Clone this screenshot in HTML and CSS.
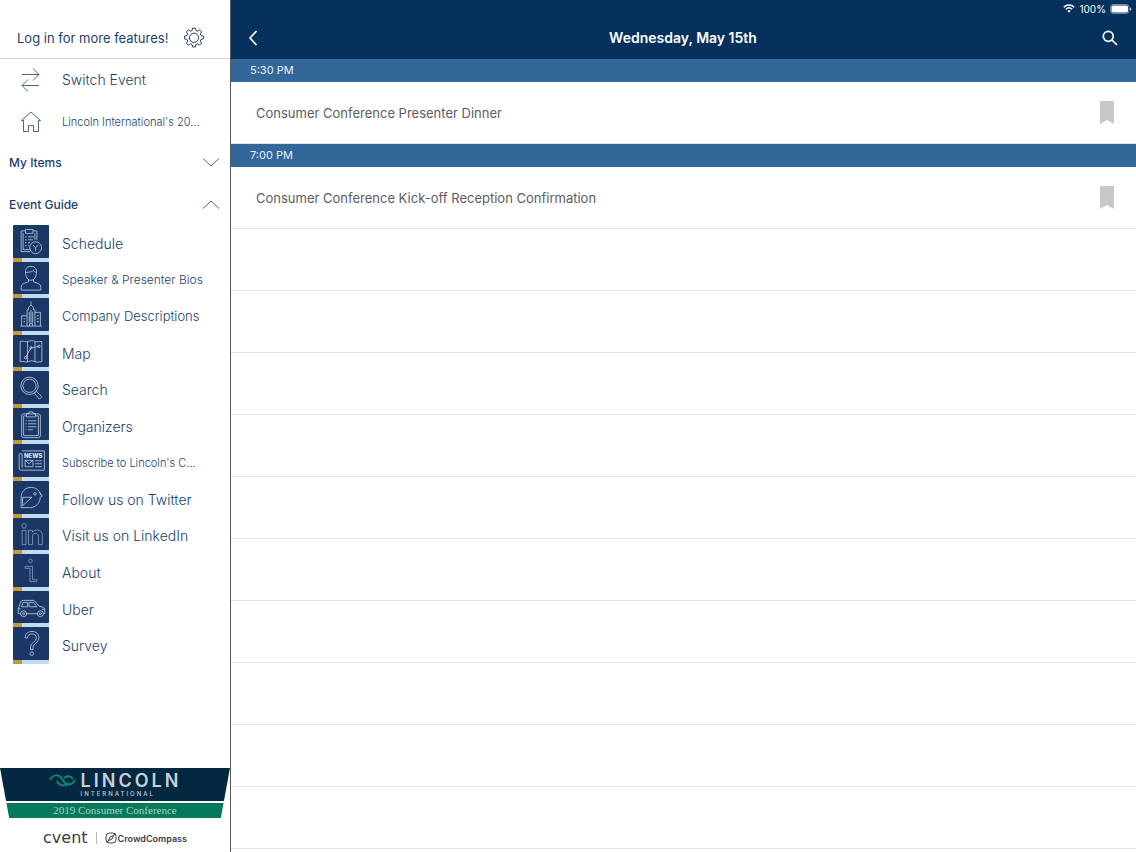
FILE: index.html
```html
<!DOCTYPE html>
<html lang="en">
<head>
  <meta charset="UTF-8" />
  <meta name="viewport" content="width=device-width, initial-scale=1.0" />
  <title>Schedule</title>
  <link rel="stylesheet" href="styles.css">
</head>
<body>

  <!-- Sidebar -->
  <aside class="sidebar">
    <div class="login">
      <a href="#login">Log in for more features!</a>
      <button class="icon-btn" aria-label="Settings">
        <svg width="22" height="22" viewBox="0 0 22 22">
          <path d="M9.6 1.2h2.8l.5 2.3 1.7.7 2-1.3 2 2-1.3 2 .8 1.7 2.3.5v2.8l-2.3.5-.8 1.7 1.3 2-2 2-2-1.3-1.7.8-.5 2.3H9.6l-.5-2.3-1.7-.8-2 1.3-2-2 1.3-2-.8-1.7-2.3-.5V9.1l2.3-.5.8-1.7-1.3-2 2-2 2 1.3 1.7-.7z" />
          <circle cx="11" cy="10.800" r="4.600" />
        </svg>
      </button>
    </div>

    <nav class="top-links">
      <a href="#switch">
        <svg width="20" height="24" viewBox="0 0 20 24"><path d="M1 6.500h17M12 .5l6 6-6 6M18 17.500H1M7 11.500l-6 6 6 6" /></svg>
        <span>Switch Event</span>
      </a>
      <a href="#home" class="small">
        <svg width="20" height="22" viewBox="0 0 20 22"><path d="M2.500 9.500H.5L10 1l9.500 8.500h-2M2.500 9.500v11h5v-6h5v6h5v-11" /></svg>
        <span>Lincoln International's 20...</span>
      </a>
    </nav>

    <button class="section-btn" aria-expanded="false">
      My Items
      <svg width="16" height="9" viewBox="0 0 16 9"><path d="M0 .5l8 7.500 8-7.500" /></svg>
    </button>
    <button class="section-btn" aria-expanded="true">
      Event Guide
      <svg width="16" height="9" viewBox="0 0 16 9"><path d="M0 8.500L8 1l8 7.500" /></svg>
    </button>

    <nav class="guide">
      <a href="#schedule">
        <span class="tile"><svg viewBox="0 0 36 33">
          <path d="M17 27H8V6h4M20 6h4v9M12.500 4.500h7.500v4h-7.500zM10 8v17h7M22 8v7M12 12h1.500M15 12h6M12 15h1.500M15 15h5M12 18h1.500M15 18h2M12 21h1.500M15 21h1" />
          <circle cx="22.700" cy="23" r="6" /><path d="M20 20.500l2.700 2.500 2.800-2.500M22.700 23v3.500" />
        </svg></span>
        <span>Schedule</span>
      </a>
      <a href="#speakers" class="medium">
        <span class="tile"><svg viewBox="0 0 36 33">
          <path d="M12.500 10c0-4 2-5.500 5.500-5.500s5.500 1.500 5.500 5.500c0 5-2 8.500-5.500 8.500S12.500 15 12.500 10zM12.500 10.500c4 0 7-.5 8-2 .8 1 1.500 2 3 2M15.500 17.500v2.500L10 22c-2 1-2 3-2 6.500h20c0-3.500 0-5.500-2-6.500l-5.500-2v-2.500" />
        </svg></span>
        <span>Speaker &amp; Presenter Bios</span>
      </a>
      <a href="#companies" class="large">
        <span class="tile"><svg viewBox="0 0 36 33">
          <path d="M7 28.500h22M8.500 28.500V18h5.500M14 28.500V12h1.500V9.500L18 7l2.500 2.500V12H22v16.500M18 7V3.500M22 14.500h5.500v14M10.500 21h1.500M10.500 24h1.500M16.300 14v11M18 12v13M19.700 14v11M24 18h2M24 21h2M24 24h2M16.500 28.500V26h3v2.500" />
        </svg></span>
        <span>Company Descriptions</span>
      </a>
      <a href="#map">
        <span class="tile"><svg viewBox="0 0 36 33">
          <path d="M7 6.500c4-1 5 1 8 0s4-1 7 0 4 0 7 0V27c-3 0-4 1-7 0s-4-1-7 0-5-1-8 0zM14.500 7v20M22 7v20M12.500 22.500l5.500-9.500 8-1.500" />
          <circle cx="12.500" cy="23" r="1.200" /><circle cx="18" cy="13" r="1.200" /><circle cx="26" cy="11.500" r="1.200" />
        </svg></span>
        <span>Map</span>
      </a>
      <a href="#search">
        <span class="tile"><svg viewBox="0 0 36 33">
          <circle cx="16.500" cy="15" r="8.800" /><circle cx="16.500" cy="15" r="6.700" /><path d="M21.500 22.500l2-2 5.500 5.500-2.500 2.500z" />
        </svg></span>
        <span>Search</span>
      </a>
      <a href="#organizers">
        <span class="tile"><svg viewBox="0 0 36 33">
          <rect x="8.500" y="6" width="19" height="24" rx="2" /><path d="M13 8h-2.500v20h15V8H23M13.500 9V5.500h2.500V4h4v1.500h2.500V9zM12.500 13h1M15 13h8.500M12.500 16h1M15 16h8.500M12.500 19h1M15 19h8.500M12.500 22h1M15 22h5" />
        </svg></span>
        <span>Organizers</span>
      </a>
      <a href="#subscribe" class="small">
        <span class="tile"><svg viewBox="0 0 36 33">
          <path d="M9 7h22.500v19.500H8c-1.500 0-2-1-2-2V10h3v14M12 16.500h8V23h-8zM12 16.500l4 3.500 4-3.500M22 17h7M22 20h7M22 23h7" />
          <text x="11" y="14">NEWS</text>
        </svg></span>
        <span>Subscribe to Lincoln's C...</span>
      </a>
      <a href="#twitter">
        <span class="tile"><svg viewBox="0 0 36 33">
          <path d="M8 27V17C8 11 12 6.500 18 6.500c5 0 8.500 3 9.300 6.500l2.200 2-2.200 1.500c0 6-5 10.500-10 10.500zM9.500 16.500H19L9.500 25zM26.500 11l2 3.500" /><circle cx="22" cy="13" r="1.300" />
        </svg></span>
        <span>Follow us on Twitter</span>
      </a>
      <a href="#linkedin">
        <span class="tile dim"><svg viewBox="0 0 36 33">
          <circle cx="11" cy="8" r="2.300" /><path d="M9 12.500h4V27H9zM15.500 12.500h4v2c2-3.500 10-3.500 10 3V27h-4v-8.500c0-4-6-4-6 0V27h-4z" />
        </svg></span>
        <span>Visit us on LinkedIn</span>
      </a>
      <a href="#about">
        <span class="tile dim"><svg viewBox="0 0 36 33">
          <circle cx="17.500" cy="7" r="1.800" /><path d="M12 12.500h7.500V26H24v2h-7V14.500h-5z" />
        </svg></span>
        <span>About</span>
      </a>
      <a href="#uber">
        <span class="tile"><svg viewBox="0 0 36 33">
          <path d="M7.500 23H5v-5l3-7.500c.3-.8 1-1 2-1h11l5.500 6 4 1c1.500.5 1.500 3 1.500 6.500h-1.500M13.500 23h11M10 11.500h4.500v4.500H8.500zM16 11.500h4.500l3.500 4.500h-8zM5 18h2.500M29 18.500h3" />
          <circle cx="10.500" cy="23" r="3" /><circle cx="10.500" cy="23" r="1" /><circle cx="27.500" cy="23" r="3" /><circle cx="27.500" cy="23" r="1" />
        </svg></span>
        <span>Uber</span>
      </a>
      <a href="#survey">
        <span class="tile"><svg viewBox="0 0 36 33">
          <path d="M12 11c0-4 3-6.500 7-6.500s7 2.500 7 6.500c0 5-6 6-6 9.500V23h-2.500v-3c0-4 6-5 6-9 0-2.500-2-4-4.500-4s-4.500 1.500-4.500 4z" /><circle cx="18.800" cy="27" r="1.800" />
        </svg></span>
        <span>Survey</span>
      </a>
    </nav>

    <footer class="sponsor">
      <div class="banner">
        <div class="banner-top">
          <svg width="27" height="14" viewBox="0 0 27 14">
            <path d="M1 6C4 0 10 0 13 5s8 9 13 1M8 7c2 5 8 6 12 2M15 4c3-3 7-2 9 1" />
          </svg>
          <div class="wordmark">
            <span class="brand">LINCOLN</span>
            <span class="brand-sub">INTERNATIONAL</span>
          </div>
        </div>
        <div class="banner-bottom">2019 Consumer Conference</div>
      </div>
      <div class="powered">
        <span class="cvent">cvent</span>
        <span class="crowd">
          <svg width="12" height="12" viewBox="0 0 12 12"><rect x="1" y="1" width="10" height="10" rx="3.500" /><path d="M8.800 3.200L7 7 3.200 8.800 5 5zM1.500 10.500L3.200 8.800M8.800 3.200l1.700-1.700" /></svg>
          CrowdCompass
        </span>
      </div>
    </footer>
  </aside>

  <!-- Schedule -->
  <main class="content">
    <header class="topbar">
      <div class="status">
        <svg width="12" height="9" viewBox="0 0 12 9"><path d="M.8 3.300c3-3 7.400-3 10.400 0M2.800 5.300c1.900-1.800 4.500-1.800 6.400 0" /><path class="fill" d="M4.200 6.800c1-.9 2.600-.9 3.600 0L6 8.800z" /></svg>
        <span>100%</span>
        <svg width="22" height="10" viewBox="0 0 22 10"><rect class="shell" x=".5" y=".5" width="18.500" height="9" rx="2.500" /><rect class="fill" x="1.500" y="1.500" width="16.500" height="7" rx="1.500" /><path class="fill" d="M20 3.500c1.600.5 1.600 2.500 0 3z" /></svg>
      </div>
      <div class="titlebar">
        <button class="icon-btn" aria-label="Back">
          <svg width="10" height="16" viewBox="0 0 10 16"><path d="M8.500 1L2 8l6.500 7" /></svg>
        </button>
        <h1>Wednesday, May 15th</h1>
        <button class="icon-btn" aria-label="Search">
          <svg width="16" height="16" viewBox="0 0 16 16"><circle cx="6.300" cy="6.300" r="5" /><path d="M10 10l5 5" /></svg>
        </button>
      </div>
    </header>

    <h2 class="time">5:30 PM</h2>
    <div class="row">
      <a href="#dinner">Consumer Conference Presenter Dinner</a>
      <button class="icon-btn" aria-label="Bookmark">
        <svg width="14" height="23" viewBox="0 0 14 23"><path class="mark" d="M0 0h14v23l-7-4-7 4z" /></svg>
      </button>
    </div>
    <h2 class="time">7:00 PM</h2>
    <div class="row">
      <a href="#reception">Consumer Conference Kick-off Reception Confirmation</a>
      <button class="icon-btn" aria-label="Bookmark">
        <svg width="14" height="23" viewBox="0 0 14 23"><path class="mark" d="M0 0h14v23l-7-4-7 4z" /></svg>
      </button>
    </div>
    <div class="row"></div>
    <div class="row"></div>
    <div class="row"></div>
    <div class="row"></div>
    <div class="row"></div>
    <div class="row"></div>
    <div class="row"></div>
    <div class="row"></div>
    <div class="row"></div>
    <div class="row"></div>
  </main>

</body>
</html>
```
FILE: styles.css
```css
* {
  box-sizing: border-box;
}

body {
  display: grid;
  grid-template-columns: 231px 1fr;
  min-height: 100vh;
  margin: 0;
  font-family: Inter, "Liberation Sans", sans-serif;
  background-color: #fff;
  color: #1c3f6b;
}

a {
  color: inherit;
  text-decoration: none;
}

button {
  font-family: inherit;
  color: inherit;
  background: none;
  border: none;
  padding: 0;
  cursor: pointer;
}

svg {
  display: block;
  fill: none;
  stroke: currentColor;
}

.icon-btn {
  display: flex;
}

/* Sidebar */
.sidebar {
  display: flex;
  flex-direction: column;
  border-right: 1px solid #55585c;
}

.login {
  display: flex;
  align-items: center;
  justify-content: space-between;
  height: 59px;
  padding: 17px 25px 0 17px;
  border-bottom: 1px solid #d3d6dc;
  font-size: 13px;
  white-space: nowrap;
}

.top-links a {
  display: flex;
  align-items: center;
  gap: 21px;
  height: 41px;
  padding-left: 21px;
  font-size: 14px;
  font-weight: 300;
  white-space: nowrap;
}

.top-links svg,
.section-btn svg {
  flex: none;
  stroke-width: 0.8;
}

.top-links .small,
.guide .small {
  padding-top: 2px;
  font-size: 11px;
}

.guide .medium {
  font-size: 12px;
}

.guide .large {
  font-size: 13px;
}

.section-btn {
  display: flex;
  align-items: center;
  justify-content: space-between;
  height: 42px;
  padding: 0 11px 0 9px;
  font-size: 12px;
  font-weight: 500;
}

.guide {
  display: grid;
  grid-template-rows: repeat(12, 1fr);
  height: 439px;
}

.guide a {
  display: flex;
  align-items: center;
  gap: 13px;
  min-height: 0;
  padding-left: 13px;
  font-size: 14px;
  font-weight: 300;
  white-space: nowrap;
}

.guide .small {
  padding-top: 0;
}

.tile {
  flex: none;
  width: 36px;
  height: 100%;
  padding-bottom: 4px;
  background: linear-gradient(90deg, #c39a3d 9px, #c3dbf1 9px);
}

.tile svg {
  width: 36px;
  height: 100%;
  background-color: #1b3766;
  border-radius: 1px;
  color: #c3d1e6;
  stroke-width: 0.8;
}

.dim svg {
  color: #8e9fc0;
}

.tile text {
  font-size: 6px;
  font-weight: 800;
  fill: #dfe8f5;
  stroke: none;
}

/* Sponsor banner */
.sponsor {
  margin-top: auto;
}

.banner {
  height: 50px;
  clip-path: polygon(0 0, 100% 0, 96% 100%, 4% 100%);
  text-align: center;
}

.banner-top {
  display: flex;
  justify-content: center;
  gap: 5px;
  height: 33px;
  padding-top: 3px;
  background-color: #04283f;
  color: #c9d0d8;
}

.banner-top svg {
  margin-top: 3px;
  color: #14836f;
  stroke-width: 2;
}

.wordmark {
  display: flex;
  flex-direction: column;
  align-items: flex-start;
}

.brand {
  font-size: 18px;
  font-weight: 600;
  line-height: 19px;
  letter-spacing: 3px;
}

.brand-sub {
  font-size: 6px;
  font-weight: 500;
  line-height: 8px;
  letter-spacing: 2px;
}

.banner-bottom {
  margin-top: 2px;
  background-color: #04795c;
  color: #a9d3c2;
  font-family: "Liberation Serif", serif;
  font-size: 11px;
  line-height: 15px;
}

.powered {
  display: flex;
  align-items: center;
  justify-content: center;
  height: 34px;
  padding-top: 6px;
  color: #3b3d42;
}

.cvent {
  padding-right: 8px;
  border-right: 1px solid #b5b7ba;
  font-family: "DejaVu Sans", sans-serif;
  font-size: 16px;
  line-height: 12px;
}

.crowd {
  display: flex;
  align-items: center;
  gap: 1px;
  padding-left: 8px;
  font-size: 9px;
  font-weight: 600;
}

/* Main area */
.content {
  min-width: 0;
}

.topbar {
  height: 59px;
  background-color: #05315c;
  color: #fff;
}

.status {
  display: flex;
  align-items: center;
  justify-content: flex-end;
  gap: 4px;
  height: 17px;
  padding-right: 4px;
  font-size: 10px;
}

.status svg {
  stroke-width: 1.5;
}

.status .fill {
  fill: #fff;
  stroke: none;
}

.status .shell {
  stroke: #6f8cab;
  stroke-width: 1;
}

.titlebar {
  display: grid;
  grid-template-columns: 1fr auto 1fr;
  align-items: center;
  height: 41px;
  padding: 0 18px 0 17px;
}

.titlebar .icon-btn:last-child {
  justify-self: end;
}

.titlebar svg {
  stroke-width: 1.7;
}

h1 {
  margin: 0;
  font-size: 14px;
  font-weight: 600;
}

.time {
  margin: 0;
  padding-left: 19px;
  background-color: #336699;
  color: #e6f1fb;
  font-size: 11px;
  font-weight: 400;
  line-height: 23px;
}

.row {
  display: flex;
  align-items: center;
  justify-content: space-between;
  height: 62px;
  padding: 0 22px 0 25px;
  border-bottom: 1px solid #e2e2e4;
  color: #5c5c5e;
  font-size: 13px;
}

.mark {
  fill: #c8c8c8;
  stroke: none;
}
```
